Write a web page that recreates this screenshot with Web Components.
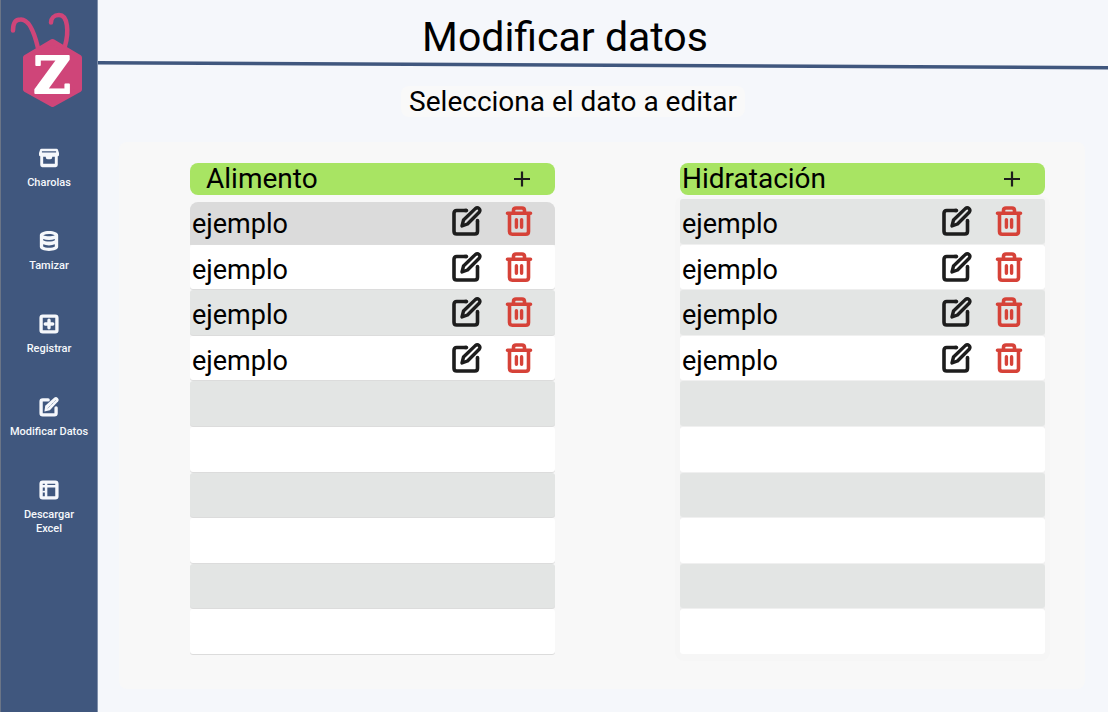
<!DOCTYPE html>
<html lang="es">
<head>
<meta charset="utf-8">
<meta name="viewport" content="width=device-width, initial-scale=1">
<title>Modificar datos</title>
<style>
  body { margin: 0; font-family: Roboto, "Liberation Sans", sans-serif; color: #000; background: #f5f7fb; }
</style>
</head>
<body>
<app-shell>
  <side-nav slot="nav">
    <nav-item icon="box">Charolas</nav-item>
    <nav-item icon="database">Tamizar</nav-item>
    <nav-item icon="plus-square">Registrar</nav-item>
    <nav-item icon="edit-solid">Modificar Datos</nav-item>
    <nav-item icon="sheet">Descargar<br>Excel</nav-item>
  </side-nav>
  <page-header>Modificar datos</page-header>
  <page-hint>Selecciona el dato a editar</page-hint>
  <data-board>
    <data-list heading="Alimento" inset>
      <data-row>ejemplo</data-row><data-row>ejemplo</data-row><data-row>ejemplo</data-row><data-row>ejemplo</data-row>
      <data-row empty></data-row><data-row empty></data-row><data-row empty></data-row><data-row empty></data-row><data-row empty></data-row><data-row empty></data-row>
    </data-list>
    <data-list heading="Hidratación" framed>
      <data-row>ejemplo</data-row><data-row>ejemplo</data-row><data-row>ejemplo</data-row><data-row>ejemplo</data-row>
      <data-row empty></data-row><data-row empty></data-row><data-row empty></data-row><data-row empty></data-row><data-row empty></data-row><data-row empty></data-row>
    </data-list>
  </data-board>
</app-shell>

<script>
const ICONS = {
  box: '<path fill="currentColor" fill-rule="evenodd" d="M3 1h18q1.500 0 1.800 1.500L24 6v2q0 2-1.500 2v10.500q0 2.500-2.500 2.500H4q-2.500 0-2.500-2.500V10Q0 10 0 8V6l1.200-3.500Q1.500 1 3 1zM3.500 4v1.500h17V4zM5 10.500v8.500h14v-8.500h-3q0 3-2.500 3h-3q-2.500 0-2.500-3z"/>',
  database: '<path fill="currentColor" fill-rule="evenodd" d="M12 0c6 0 11 2 11 5v14c0 3-5 5-11 5S1 22 1 19V5c0-3 5-5 11-5zM5 5c4 1.800 10 1.800 14 0-4-1.800-10-1.800-14 0zM5 9.500v1.500c2 2 12 2 14 0V9.500c-4 1.700-10 1.700-14 0zM5 16v2.500c2 2 12 2 14 0V16c-4 1.700-10 1.700-14 0z"/>',
  'plus-square': '<rect x="2.500" y="2.500" width="19" height="19" rx="2" fill="none" stroke="currentColor" stroke-width="4"/><path d="M12 7.500v9M7.500 12h9" stroke="currentColor" stroke-width="4" stroke-linecap="round"/>',
  'edit-solid': '<path d="M11 3.500H4.500q-2 0-2 2v14q0 2 2 2h14q2 0 2-2V13" fill="none" stroke="currentColor" stroke-width="4" stroke-linecap="round"/><path d="M6.500 17.500l1-7L18.500.6q2-1.300 4 .5t.5 4L13 15.800z" fill="currentColor"/><path d="M10.500 13.500L20 4" stroke="#40577e" stroke-width=".7" stroke-dasharray="1.500 1"/>',
  sheet: '<path fill="currentColor" fill-rule="evenodd" d="M4.500 .5h15q4 0 4 4v15q0 4-4 4h-15q-4 0-4-4v-15q0-4 4-4zM4.500 4.500V6H7V4.500zM10 4.500V6h9.500V4.500zM4.500 9v10.500H7V9zM10 9v10.500h9.500V9z"/><path d="M4 14h3.500" stroke="currentColor" stroke-width="2"/>',
  plus: '<path d="M12 4.500v15M4 12h16" stroke="#1d1d1d" stroke-width="2.200" fill="none"/>',
  edit: '<path d="M15 4.500H4.700Q2 4.500 2 7.200v18.100Q2 28 4.700 28h18.100q2.700 0 2.700-2.700V15" fill="none" stroke="#1d1d1d" stroke-width="3.600"/><path d="M13 4.500h1.500M25.500 15v-.5" stroke="#1d1d1d" stroke-width="3.600" stroke-linecap="round"/><path d="M10 20l1.500-6L23.300 2.600q2-1.500 3.700 0t.2 3.700L15.500 18z" fill="none" stroke="#1d1d1d" stroke-width="3.400" stroke-linejoin="round"/>',
  trash: '<path d="M3.500 7.200h23M9.500 7V4.500Q9.500 2 12 2h6q2.500 0 2.500 2.500V7M5.500 8v17.500q0 2.700 2.700 2.700h13.600q2.700 0 2.700-2.700V8" fill="none" stroke="#d64238" stroke-width="3.600" stroke-linecap="round"/><path d="M12.400 13.700v7.600M17.600 13.700v7.600" stroke="#d64238" stroke-width="3.400" stroke-linecap="round"/>'
};

const svg = (name, size, box) =>
  `<svg width="${size}" height="${size}" viewBox="0 0 ${box} ${box}" aria-hidden="true">${ICONS[name]}</svg>`;

const define = (name, render) => customElements.define(name, class extends HTMLElement {
  constructor() { super(); this.attachShadow({ mode: 'open' }); }
  connectedCallback() { this.shadowRoot.innerHTML = render(this); }
});

define('app-shell', () => `
  <style>
    :host { display: grid; grid-template-columns: 98px 1fr; min-height: 100vh; }
    main { display: flex; flex-direction: column; min-width: 0; }
  </style>
  <slot name="nav"></slot>
  <main><slot></slot></main>`);

define('side-nav', () => `
  <style>
    :host { display: block; box-sizing: border-box; background: #40577e; border-left: 1px solid #6b7587; border-right: 1px solid #8090ab; }
    .logo { display: block; }
    nav { display: flex; flex-direction: column; gap: 41px; padding-top: 38px; }
  </style>
  <svg class="logo" width="96" height="110" viewBox="1 0 96 110" role="img" aria-label="Logo">
    <path d="M38 48C34 31 28 19 20.500 19.500 15 19.500 13 23 13 30.500M65 46C69 32 68 15 59 15 54 15 51 18.500 51 22.500" fill="none" stroke="#cf4579" stroke-width="4.500" stroke-linecap="round"/>
    <path d="M52.500 41.500L79.500 57.500V89.500L52.500 104.500 25.500 89.500V57.500z" fill="#cf4579" stroke="#cf4579" stroke-width="5" stroke-linejoin="round"/>
    <text x="52" y="93" text-anchor="middle" font-family="DejaVu Serif, serif" font-weight="700" font-size="51" fill="#fff" stroke="#fff" stroke-width="2" stroke-linejoin="round">Z</text>
  </svg>
  <nav aria-label="Principal"><slot></slot></nav>`);

define('nav-item', el => `
  <style>
    :host { display: block; }
    a { display: flex; flex-direction: column; align-items: center; gap: 8px; padding: 0 4px; color: #f5f7fb; text-decoration: none; }
    span { font-size: 11px; line-height: 14px; font-weight: 500; text-align: center; }
  </style>
  <a href="#">${svg(el.getAttribute('icon'), 20, 24)}<span><slot></slot></span></a>`);

define('page-header', () => `
  <style>
    :host { display: block; }
    h1 { margin: 0; padding: 15px 76px 0 0; font-size: 41px; line-height: 45px; font-weight: 400; text-align: center; }
    svg { display: block; width: 100%; height: 12px; }
  </style>
  <h1><slot></slot></h1>
  <svg viewBox="0 0 1000 12" preserveAspectRatio="none" aria-hidden="true"><path d="M0 2.800L1000 7.800" stroke="#40577e" stroke-width="3.500"/></svg>`);

define('page-hint', () => `
  <style>
    :host { display: flex; justify-content: center; padding: 14px 60px 0 0; }
    p { margin: 0; padding: 0 8px; font-size: 28px; line-height: 31px; background: #f9f9f9; border-radius: 8px; }
  </style>
  <p><slot></slot></p>`);

define('data-board', () => `
  <style>
    :host { display: grid; grid-template-columns: 1fr 1fr; gap: 125px; margin: 25px 23px 23px 21px; padding: 21px 40px 35px 71px; background: #f8f8f8; border-radius: 8px; }
  </style>
  <slot></slot>`);

define('data-list', el => `
  <style>
    :host { display: block; min-width: 0; }
    header { display: flex; align-items: center; justify-content: space-between; height: 32px; padding: 0 21px 0 2px; background: #a8e463; border-radius: 8px; }
    :host([inset]) header { padding-left: 16px; }
    h2 { margin: 0; font-size: 28px; line-height: 32px; font-weight: 400; }
    button { display: grid; padding: 0; border: 0; background: none; cursor: pointer; }
    .rows { display: grid; grid-auto-rows: 1fr; gap: 1px; min-height: 455px; margin-top: 4px; }
    :host([inset]) ::slotted(*) { --edge: 0 1px 0 #dcdcdc; }
    :host([inset]) ::slotted(:first-child) { --row: #dbdbdb; --radius: 8px 8px 0 0; margin-top: 3px; padding-bottom: 3px; }
    :host([framed]) .rows { background: #f0f0f0; border-radius: 4px; box-shadow: 0 2px 0 5px #f6f6f6; }
    ::slotted(:nth-child(odd)) { --row: #e3e5e4; }
  </style>
  <header><h2>${el.getAttribute('heading')}</h2>
    <button type="button" aria-label="Agregar ${el.getAttribute('heading')}">${svg('plus', 24, 24)}</button></header>
  <div class="rows" role="list"><slot></slot></div>`);

define('data-row', el => `
  <style>
    :host { display: flex; align-items: center; box-sizing: border-box; padding: 0 21px 0 2px; background: var(--row, #fff); border-radius: var(--radius, 3px); box-shadow: var(--edge, none); font-size: 27px; line-height: 32px; }
    span { flex: 1; padding-top: 6px; }
    .actions { display: flex; gap: 22px; }
    button { display: grid; padding: 0; border: 0; background: none; cursor: pointer; }
  </style>
  ${el.hasAttribute('empty') ? '' : `<span><slot></slot></span>
  <div class="actions">
    <button type="button" aria-label="Editar">${svg('edit', 30, 30)}</button>
    <button type="button" aria-label="Eliminar">${svg('trash', 30, 30)}</button>
  </div>`}`);

document.querySelectorAll('data-row').forEach(row => row.setAttribute('role', 'listitem'));
</script>
</body>
</html>
